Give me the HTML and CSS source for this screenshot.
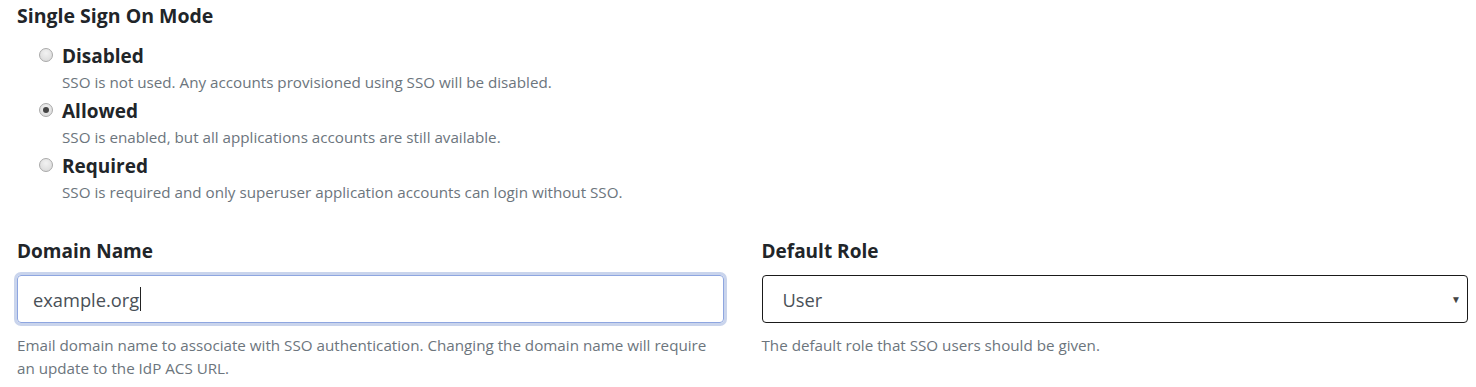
FILE: index.html
```html
<!DOCTYPE html>
<html>
<head>
<meta charset="utf-8">
<link rel="stylesheet" href="styles.css">
</head>
<body>
<div class="page">
  <h2 class="section-title">Single Sign On Mode</h2>
  <div class="options">
    <label class="option">
      <span class="radio"></span>
      <span class="option-body">
        <span class="option-label">Disabled</span>
        <span class="option-desc">SSO is not used. Any accounts provisioned using SSO will be disabled.</span>
      </span>
    </label>
    <label class="option">
      <span class="radio checked"></span>
      <span class="option-body">
        <span class="option-label">Allowed</span>
        <span class="option-desc">SSO is enabled, but all applications accounts are still available.</span>
      </span>
    </label>
    <label class="option">
      <span class="radio"></span>
      <span class="option-body">
        <span class="option-label">Required</span>
        <span class="option-desc">SSO is required and only superuser application accounts can login without SSO.</span>
      </span>
    </label>
  </div>
  <div class="fields">
    <div class="field">
      <div class="field-label">Domain Name</div>
      <div class="input focused"><span class="value">example.org</span><span class="caret"></span></div>
      <div class="help">Email domain name to associate with SSO authentication. Changing the domain name will require an update to the IdP ACS URL.</div>
    </div>
    <div class="field">
      <div class="field-label">Default Role</div>
      <div class="select"><span class="value">User</span><span class="arrow">▼</span></div>
      <div class="help">The default role that SSO users should be given.</div>
    </div>
  </div>
</div>
</body>
</html>
```
FILE: styles.css
```css
html, body {
  margin: 0;
  background: #ffffff;
}
body {
  font-family: "Open Sans", "Noto Sans", sans-serif;
  color: #212529;
}
.page {
  padding: 3px 8px 0 17px;
}
.section-title {
  margin: 0;
  font-size: 19.5px;
  line-height: 26px;
  font-weight: 700;
}
.options {
  margin-top: 13px;
  padding-left: 22px;
  display: flex;
  flex-direction: column;
  gap: 3px;
}
.option {
  display: flex;
  align-items: flex-start;
}
.radio {
  width: 14px;
  height: 14px;
  border-radius: 50%;
  box-sizing: border-box;
  border: 1px solid #a9a9a9;
  background: radial-gradient(circle at 50% 35%, #f2f2f2 0%, #d6d6d6 100%);
  margin-top: 6px;
  margin-right: 9px;
  display: flex;
  align-items: center;
  justify-content: center;
  flex: none;
}
.radio.checked::after {
  content: "";
  width: 6px;
  height: 6px;
  border-radius: 50%;
  background: #444;
}
.option-body {
  display: flex;
  flex-direction: column;
}
.option-label {
  font-size: 19px;
  font-weight: 700;
  line-height: 28px;
}
.option-desc {
  font-size: 15.2px;
  line-height: 24px;
  color: #6c757d;
}
.fields {
  margin-top: 34px;
  display: grid;
  grid-template-columns: 1fr 1fr;
  column-gap: 38px;
}
.field-label {
  font-size: 19px;
  font-weight: 700;
  line-height: 26px;
  margin-bottom: 11px;
}
.input, .select {
  height: 48px;
  box-sizing: border-box;
  border-radius: 4px;
  display: flex;
  align-items: center;
  font-size: 18.3px;
  color: #495057;
}
.input {
  border: 1px solid #8ea6e0;
  box-shadow: 0 0 0 3px #c9d4ec;
  padding-left: 15px;
}
.caret {
  width: 1px;
  height: 24px;
  background: #222;
  margin-left: 1px;
}
.select {
  border: 1px solid #1a1a1a;
  padding: 0 6px 0 20px;
  justify-content: space-between;
}
.arrow {
  font-size: 10px;
  color: #444;
}
.help {
  margin-top: 11px;
  font-size: 15.2px;
  line-height: 23px;
  color: #6c757d;
}
```
